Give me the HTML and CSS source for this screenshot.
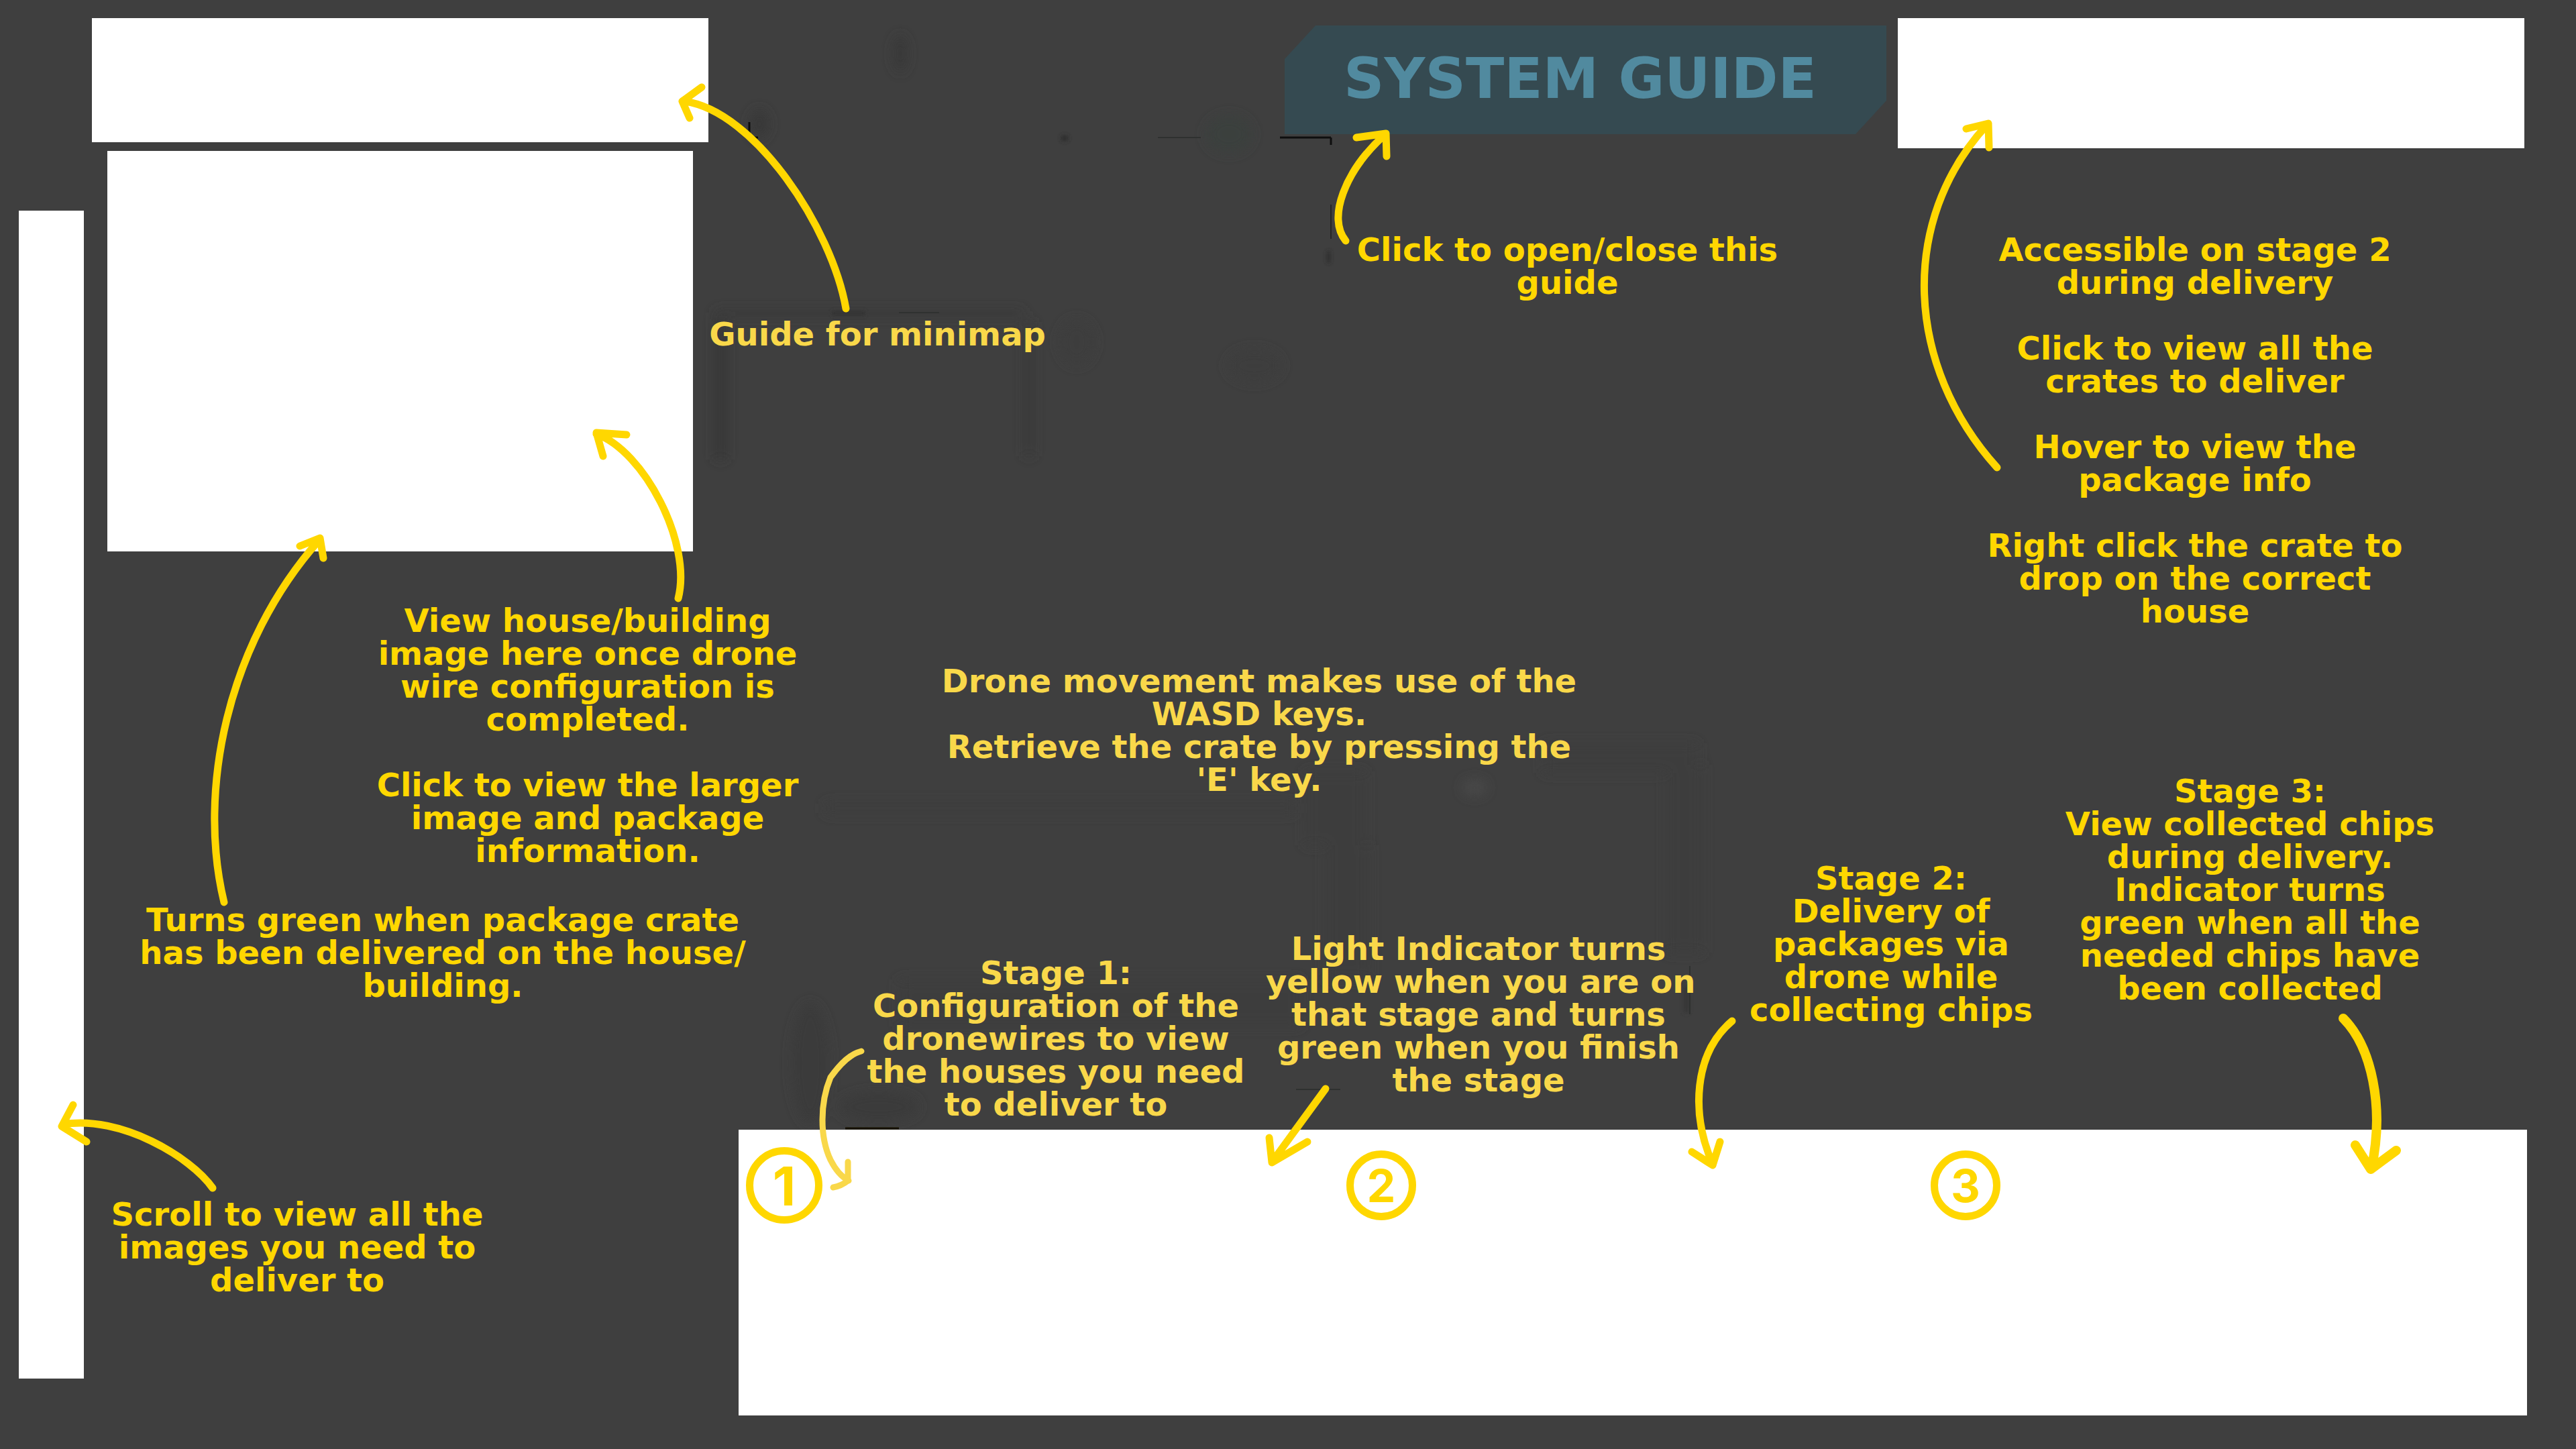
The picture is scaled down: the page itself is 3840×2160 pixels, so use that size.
FILE: index.html
```html
<!DOCTYPE html>
<html lang="en">
<head>
<meta charset="utf-8">
<title>System Guide</title>
<link rel="stylesheet" href="styles.css">
</head>
<body>
<main class="guide">
  <svg class="layer" viewBox="0 0 3840 2160" preserveAspectRatio="none" aria-hidden="true">
    <defs>
      <filter id="soft" x="-50%" y="-50%" width="200%" height="200%"><feGaussianBlur stdDeviation="9"/></filter>
      <filter id="edge" x="-50%" y="-50%" width="200%" height="200%"><feGaussianBlur stdDeviation="3"/></filter>
    </defs>
    <g filter="url(#soft)">
      <rect x="1066" y="475" width="16" height="210" fill="#343434"/>
      <rect x="1066" y="463" width="460" height="8" fill="#393939"/>
      <rect x="1528" y="480" width="12" height="200" fill="#393939"/>
      <ellipse cx="1342" cy="80" rx="10" ry="28" fill="#373737"/>
      <ellipse cx="1132" cy="185" rx="14" ry="22" fill="#383838"/>
      <ellipse cx="1832" cy="200" rx="34" ry="28" fill="#3a3f3d"/>
      <ellipse cx="1605" cy="510" rx="26" ry="34" fill="#3d3d3d"/>
      <ellipse cx="1870" cy="545" rx="40" ry="24" fill="#3d3d3d"/>
      <rect x="1230" y="1197" width="700" height="16" fill="#3c3c3c"/>
      <rect x="1945" y="1150" width="90" height="110" fill="#3c3c3c"/>
      <rect x="1975" y="1260" width="66" height="200" fill="#3c3c3c"/>
      <rect x="2300" y="1108" width="230" height="44" fill="#3d3d3d"/>
      <rect x="2484" y="1140" width="54" height="280" fill="#3c3c3c"/>
      <ellipse cx="1208" cy="1585" rx="28" ry="90" fill="#3a3a3a"/>
      <ellipse cx="1310" cy="1650" rx="60" ry="22" fill="#3b3b3b"/>
      <rect x="1340" y="1460" width="600" height="70" fill="#3d3d3d"/>
      <ellipse cx="2198" cy="1174" rx="18" ry="12" fill="#4a4a4a"/>
    </g>
    <g filter="url(#edge)">
      <rect x="1978" y="374" width="5" height="18" fill="#2a2a2a"/>
      <rect x="1582" y="202" width="10" height="8" fill="#2a2a2a"/>
      <rect x="2510" y="1470" width="8" height="40" fill="#353535"/>
      <rect x="1240" y="464" width="50" height="6" fill="#303030"/>
    </g>
    <path d="M1117 182V205H1130" fill="none" stroke="#0c0c0c" stroke-width="3"/>
    <path d="M1908 205H1984M1984 205V216" fill="none" stroke="#0e0e0e" stroke-width="3"/>
    <path d="M1984 305V356" fill="none" stroke="#0e0e0e" stroke-width="1"/>
    <path d="M1726 205H1790M1340 466H1400M2519 1440V1512M1932 1624H1998" fill="none" stroke="#2f3130" stroke-width="2"/>
    <path d="M1260 1682H1340" stroke="#171200" stroke-width="3"/>
  </svg>

  <section class="rail" aria-label="Image list"></section>

  <section class="side">
    <div class="panel minimap-bar"></div>
    <div class="panel preview"></div>
    <div class="note note-view">
      <p>View house/building<br>image here once drone<br>wire configuration is<br>completed.</p>
      <p>Click to view the larger<br>image and package<br>information.</p>
    </div>
    <p class="note note-green">Turns green when package crate<br>has been delivered on the house/<br>building.</p>
    <p class="note note-scroll">Scroll to view all the<br>images you need to<br>deliver to</p>
  </section>

  <section class="main">
    <div class="top">
      <p class="note pale note-minimap">Guide for minimap</p>
      <div class="toggle">
        <button class="title" type="button">SYSTEM GUIDE</button>
        <p class="note note-toggle">Click to open/close this<br>guide</p>
      </div>
      <div class="crates">
        <div class="panel crate-bar"></div>
        <div class="note note-crates">
          <p>Accessible on stage 2<br>during delivery</p>
          <p>Click to view all the<br>crates to deliver</p>
          <p>Hover to view the<br>package info</p>
          <p>Right click the crate to<br>drop on the correct<br>house</p>
        </div>
      </div>
    </div>

    <div class="stages">
      <div class="stage-start">
        <p class="note pale note-keys">Drone movement makes use of the<br>WASD keys.<br>Retrieve the crate by pressing the<br>'E' key.</p>
        <div class="pair">
          <p class="note pale note-one">Stage 1:<br>Configuration of the<br>dronewires to view<br>the houses you need<br>to deliver to</p>
          <p class="note pale">Light Indicator turns<br>yellow when you are on<br>that stage and turns<br>green when you finish<br>the stage</p>
        </div>
      </div>
      <p class="note note-two">Stage 2:<br>Delivery of<br>packages via<br>drone while<br>collecting chips</p>
      <p class="note note-three">Stage 3:<br>View collected chips<br>during delivery.<br>Indicator turns<br>green when all the<br>needed chips have<br>been collected</p>
    </div>

    <div class="panel progress">
      <span class="badge badge-large">1</span>
      <span class="badge">2</span>
      <span class="badge">3</span>
    </div>
  </section>

  <svg class="layer arrows" viewBox="0 0 3840 2160" preserveAspectRatio="none" aria-hidden="true">
    <path d="M1261 460C1240 340 1125 165 1020 151M1046 130L1017 151L1028 176"/>
    <path d="M1011 892C1032 810 960 672 889 647M934 648L889 645L899 680"/>
    <path d="M334 1345C294 1180 338 960 476 805M447 814L477 802L482 832"/>
    <path d="M317 1771C285 1725 180 1662 94 1676M109 1647L92 1679L129 1702"/>
    <path d="M2006 359C1978 325 2005 255 2063 202M2022 205L2066 199L2067 233"/>
    <path d="M2977 697C2840 545 2830 330 2962 186M2931 192L2964 184L2965 220"/>
    <path class="pale-line" d="M1284 1567C1268 1571 1254 1584 1238 1606C1222 1645 1222 1695 1238 1729C1246 1745 1254 1754 1265 1760M1264 1732V1760Q1254 1768 1242 1770"/>
    <path d="M1976 1623L1897 1731M1892 1696L1896 1733L1949 1702"/>
    <path d="M2582 1522C2525 1570 2520 1660 2553 1735M2522 1717L2553 1737L2564 1702"/>
    <path class="bold-line" d="M3493 1518C3535 1560 3555 1650 3535 1742M3511 1707L3534 1743L3572 1715"/>
  </svg>
</main>
</body>
</html>
```
FILE: styles.css
```css
* {
  box-sizing: border-box;
}

body {
  margin: 0;
  background: #3f3f3f;
  font-family: "DejaVu Sans", sans-serif;
}

p {
  margin: 0;
}

.guide {
  position: relative;
  display: grid;
  grid-template-columns: 97px 964px 1fr;
  column-gap: 12px;
  min-height: 100vh;
  padding: 27px 73px 50px 28px;
}

.layer {
  position: absolute;
  inset: 0;
  width: 100%;
  height: 100%;
  pointer-events: none;
}

.arrows path {
  fill: none;
  stroke: #ffd700;
  stroke-width: 11;
  stroke-linecap: round;
  stroke-linejoin: round;
}

.arrows .pale-line {
  stroke: #f9d84a;
  stroke-width: 9;
}

.arrows .bold-line {
  stroke-width: 14;
}

.panel,
.rail {
  position: relative;
  background: #fff;
}

.rail {
  margin: 287px 0 55px;
}

.side {
  position: relative;
  display: flex;
  flex-direction: column;
  align-items: flex-start;
}

.minimap-bar {
  width: 919px;
  height: 185px;
}

.preview {
  width: 873px;
  height: 597px;
  margin: 13px 0 0 23px;
}

.note {
  position: relative;
  color: #ffd700;
  font-size: 48px;
  font-weight: 700;
  line-height: 49px;
  text-align: center;
  white-space: nowrap;
}

.note p + p {
  margin-top: 49px;
}

.pale {
  color: #f9d84a;
}

.note-view {
  width: 660px;
  margin: 79px 0 0 409px;
}

.note-green {
  width: 960px;
  margin: 54px 0 0 43px;
}

.note-scroll {
  width: 580px;
  margin: 292px 0 0 16px;
}

.main {
  display: flex;
  flex-direction: column;
  margin-left: -12px;
}

.top {
  display: grid;
  grid-template-columns: minmax(0, 814fr) minmax(0, 914fr) minmax(0, 938fr);
}

.note-minimap {
  width: 520px;
  margin: 447px 0 0 -53px;
}

.toggle {
  padding: 11px 17px 0 0;
}

.title {
  position: relative;
  display: block;
  width: 100%;
  height: 162px;
  padding: 0 16px 4px 0;
  border: 0;
  background: #354a51;
  clip-path: polygon(46px 0, 100% 0, 100% calc(100% - 50px), calc(100% - 46px) 100%, 0 100%, 0 50px);
  color: #518a9f;
  font: 700 84px "DejaVu Sans", sans-serif;
  cursor: pointer;
}

.note-toggle {
  margin: 148px 54px 0 0;
}

.crates {
  padding-right: 4px;
}

.crate-bar {
  height: 194px;
}

.note-crates {
  margin: 127px 48px 0 0;
}

.stages {
  display: grid;
  grid-template-columns: minmax(0, 1320fr) minmax(0, 476fr) minmax(0, 594fr);
  align-items: start;
  margin-top: 55px;
  padding: 0 116px 0 160px;
}

.stage-start {
  padding-right: 60px;
}

.note-keys {
  margin-right: 28px;
}

.pair {
  display: grid;
  grid-template-columns: minmax(0, 626fr) minmax(0, 634fr);
  margin-top: 203px;
}

.note-one {
  margin-top: 36px;
}

.note-two {
  margin-top: 294px;
}

.note-three {
  margin-top: 164px;
}

.progress {
  display: grid;
  grid-template-columns: 895fr 871fr 889fr;
  flex: 1;
  align-items: center;
  align-content: start;
  margin-top: 13px;
  padding: 26px 0 0 11px;
}

.badge {
  display: flex;
  align-items: center;
  justify-content: center;
  width: 104px;
  height: 104px;
  border: 11px solid #ffd700;
  border-radius: 50%;
  color: #ffd700;
  font: 700 68px "Inter", sans-serif;
}

.badge-large {
  width: 114px;
  height: 114px;
  font-size: 80px;
}
```
